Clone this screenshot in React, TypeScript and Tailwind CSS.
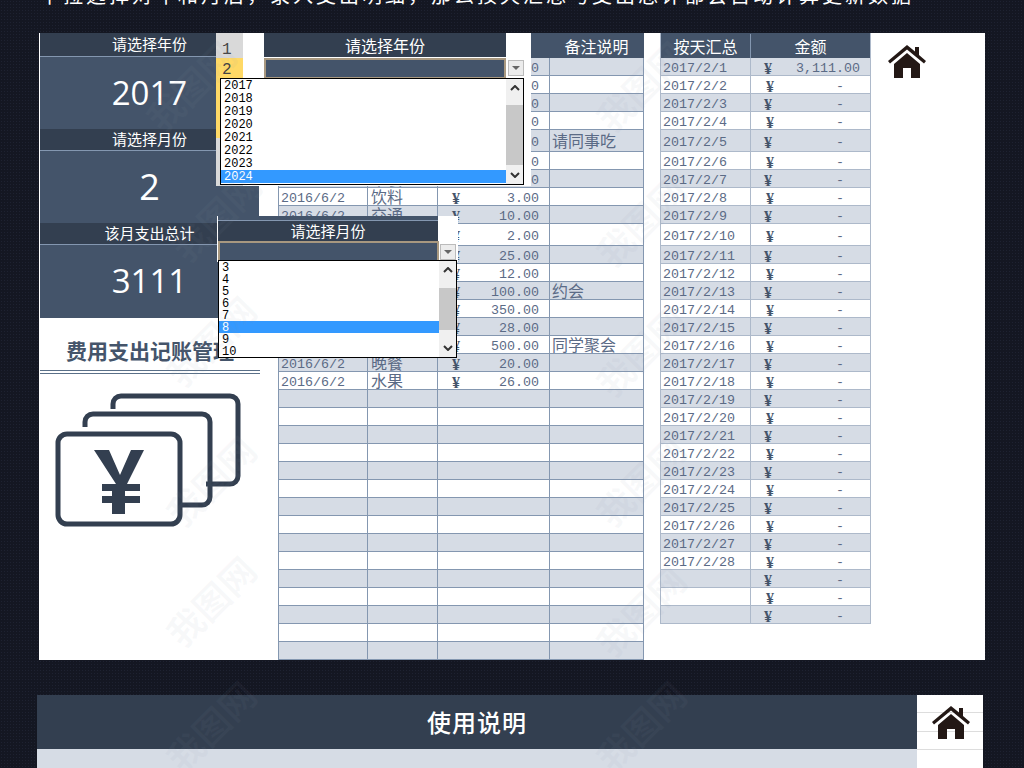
const mono = "font-['Liberation_Mono','Noto_Sans_CJK_SC',monospace]";
const yen = "font-['Liberation_Serif',serif] text-[16px] font-bold text-[#44546a]";

const detailRows: { date?: string; kind?: string; amount?: string; note?: string }[] = [
  { date: '2016/6/1', kind: '早餐', amount: '10.00' },
  { date: '2016/6/1', kind: '午餐', amount: '20.00' },
  { date: '2016/6/1', kind: '晚餐', amount: '30.00' },
  { date: '2016/6/1', kind: '水果', amount: '10.00' },
  { date: '2016/6/1', kind: '聚餐', amount: '200.00', note: '请同事吃' },
  { date: '2016/6/1', kind: '交通', amount: '10.00' },
  { date: '2016/6/2', kind: '早餐', amount: '10.00' },
  { date: '2016/6/2', kind: '饮料', amount: '3.00' },
  { date: '2016/6/2', kind: '交通', amount: '10.00' },
  { amount: '2.00' },
  { amount: '25.00' },
  { amount: '12.00' },
  { amount: '100.00', note: '约会' },
  { amount: '350.00' },
  { amount: '28.00' },
  { amount: '500.00', note: '同学聚会' },
  { date: '2016/6/2', kind: '晚餐', amount: '20.00' },
  { date: '2016/6/2', kind: '水果', amount: '26.00' },
  ...Array.from({ length: 15 }, () => ({})),
];

const dayRows = Array.from({ length: 31 }, (_, i) => (i < 28 ? `2017/2/${i + 1}` : ''));
const watermarks = [
  [190, 85], [215, 215], [210, 340], [210, 480], [210, 600], [210, 725],
  [640, 85], [640, 220], [640, 350], [640, 480], [640, 610], [640, 725],
];

const rowHeight = (i: number) => (i === 4 || i === 9 ? 'h-[22px]' : 'h-[18px]');
const rowBg = (i: number) => (i % 2 === 0 ? 'bg-[#d6dce5]' : 'bg-white');

function HomeIcon({ className }: { className: string }) {
  return (
    <svg viewBox="0 0 38 34" className={className} fill="#231815">
      <path d="M0 17 19 1l8 6.5V3h4v8l7 6-2 2.5-17-14-17 14z" />
      <path d="M6 20 19 9l13 11v14h-9V24h-8v10H6z" />
    </svg>
  );
}

function YenCards() {
  return (
    <svg viewBox="0 0 186 134" className="ml-[16px] mt-[19px] h-[134px] w-[186px]" fill="none" stroke="#333f50" strokeWidth="5">
      <path d="M58 16v-5a8 8 0 0 1 8-8h109a8 8 0 0 1 8 8v72a8 8 0 0 1-8 8h-24" />
      <path d="M30 34v-5a8 8 0 0 1 8-8h109a8 8 0 0 1 8 8v75a8 8 0 0 1-8 8h-24" />
      <rect x="3" y="41" width="122" height="90" rx="9" />
      <path stroke="none" fill="#333f50" d="M39 57h15l11 25 11-25h13l-17 34h13v7H70v5h15v7H70v11H57v-11H47v-7h10v-5H47v-7h14z" />
    </svg>
  );
}

function SidePanel() {
  const blocks = [
    ['请选择年份', '2017', 'h-[24px]', 'h-[72px]', 'text-[33px]', ''],
    ['请选择月份', '2', 'h-[22px]', 'h-[72px]', 'text-[36px]', ''],
    ['该月支出总计', '3111', 'h-[22px]', 'h-[73px]', 'text-[33px]', 'pb-[2px]'],
  ];
  return (
    <div className="h-full w-[239px] shrink-0 bg-white">
      <div className="ml-px w-[219px] text-white">
        {blocks.map(([label, value, labelH, valueH, size, nudge]) => (
          <div key={label}>
            <div className={`${labelH} flex items-center justify-center border-b border-[#8497b0] bg-[#333f50] font-['Noto_Sans_CJK_SC',sans-serif] text-[15px]`}>
              {label}
            </div>
            <div className={`${valueH} ${size} ${nudge} flex items-center justify-center bg-[#44546a] font-['Open_Sans',sans-serif]`}>
              {value}
            </div>
          </div>
        ))}
      </div>
      <div className="ml-[27px] mt-[18px] font-['Noto_Sans_CJK_SC',sans-serif] text-[21px] font-bold leading-[28px] text-[#44546a]">费用支出记账管理</div>
      <div className="ml-px mt-[6px] h-[4px] w-[220px] border-y border-[#5a7088]" />
      <YenCards />
    </div>
  );
}

function DetailTable() {
  const cell = 'h-full border-r border-[#8497b0] pt-[4px]';
  return (
    <div className="w-[366px] shrink-0 border-l border-[#8497b0]">
      <div className="flex h-[25px] items-center bg-[#44546a] text-[16px] text-white font-['Noto_Sans_CJK_SC',sans-serif]">
        <div className="w-[270px]" />
        <div className="flex-1 text-center">备注说明</div>
      </div>
      {detailRows.map((row, i) => (
        <div key={i} className={`${rowHeight(i)} ${rowBg(i)} ${mono} flex items-center border-b border-[#8497b0] text-[13.33px] leading-none text-[#5b6b86]`}>
          <div className={`${cell} flex w-[89px] items-center pl-[2px]`}>{row.date}</div>
          <div className={`${cell} flex w-[70px] items-center pl-[3px] text-[16px]`}>{row.kind}</div>
          <div className={`${cell} flex w-[112px] items-center justify-between pl-[14px] pr-[10px]`}>
            <span className={yen}>{row.amount ? '¥' : ''}</span>
            <span>{row.amount}</span>
          </div>
          <div className={`${cell} flex flex-1 items-center pl-[2px] text-[16px]`}>{row.note}</div>
        </div>
      ))}
    </div>
  );
}

function DayTable() {
  return (
    <div className="ml-[16px] w-[211px] shrink-0 self-start border-x border-[#adb9ca]">
      <div className={`flex h-[25px] items-center bg-[#44546a] font-['Noto_Sans_CJK_SC',sans-serif] text-[16px] text-white`}>
        <div className="w-[90px] border-r border-[#8497b0] text-center">按天汇总</div>
        <div className="flex-1 text-center">金额</div>
      </div>
      {dayRows.map((day, i) => (
        <div key={i} className={`${rowHeight(i)} ${rowBg(i)} ${mono} flex items-center border-b border-[#adb9ca] text-[13.33px] leading-none text-[#5b6b86]`}>
          <div className="flex h-full w-[90px] items-center border-r border-[#adb9ca] pl-[2px] pt-[4px]">{day}</div>
          <div className={`flex h-full flex-1 items-center justify-between pr-[10px] pt-[4px] ${i % 2 === 0 ? 'pl-[13px]' : 'pl-[15px]'}`}>
            <span className={yen}>¥</span>
            <span className={i === 0 ? '' : 'pr-[16px]'}>{i === 0 ? '3,111.00' : '-'}</span>
          </div>
        </div>
      ))}
    </div>
  );
}

function ListBox({ items, selected, rowClass, className, thumbClass }: { items: string[]; selected: string; rowClass: string; className: string; thumbClass: string }) {
  return (
    <div className={`absolute flex border border-black bg-white ${className}`}>
      <div className={`flex-1 ${mono} text-[12px] leading-none text-black`}>
        {items.map((item) => (
          <div key={item} className={`${rowClass} flex items-center pl-[3px] ${item === selected ? 'bg-[#3399ff] text-white' : ''}`}>{item}</div>
        ))}
      </div>
      <div className="flex w-[17px] flex-col items-center justify-between bg-[#f0f0f0] text-[#333]">
        <svg viewBox="0 0 10 6" className="mt-[6px] h-[6px] w-[10px]" fill="none" stroke="currentColor" strokeWidth="2"><path d="M1 5 5 1l4 4" /></svg>
        <div className={`w-full bg-[#c8c8c8] ${thumbClass}`} />
        <svg viewBox="0 0 10 6" className="mb-[6px] h-[6px] w-[10px]" fill="none" stroke="currentColor" strokeWidth="2"><path d="M1 1l4 4 4-4" /></svg>
      </div>
    </div>
  );
}

function DropButton({ className }: { className: string }) {
  return (
    <div className={`absolute flex h-[16px] w-[16px] items-center justify-center border border-[#bbbbbb] bg-[#ececec] ${className}`}>
      <div className="h-0 w-0 border-x-[4px] border-t-[4px] border-x-transparent border-t-[#666666]" />
    </div>
  );
}

function YearPopup() {
  return (
    <>
      <div className="absolute left-[216px] top-[33px] flex h-[153px] w-[315px] bg-white">
        <div className={`w-[27px] ${mono} text-[16px] leading-none text-[#444]`}>
          <div className="flex h-[25px] items-end bg-[#d9d9d9] pl-[6px]">1</div>
          <div className="h-[80px] bg-[#ffd966] pl-[6px] pt-[4px]">2</div>
          <div className="h-[48px] bg-[#d9d9d9]" />
        </div>
      </div>
      <div className="absolute left-[264px] top-[33px] flex h-[24px] w-[242px] items-center justify-center bg-[#333f50] font-['Noto_Sans_CJK_SC',sans-serif] text-[16px] text-white">请选择年份</div>
      <div className="absolute left-[264px] top-[58px] h-[21px] w-[242px] border-2 border-[#a89880] bg-[#44546a]" />
      <DropButton className="left-[508px] top-[60px]" />
      <ListBox
        items={['2017', '2018', '2019', '2020', '2021', '2022', '2023', '2024']}
        selected="2024"
        rowClass="h-[13px]"
        className="left-[220px] top-[78px] h-[107px] w-[304px]"
        thumbClass="mt-[6px] h-[60px]"
      />
    </>
  );
}

function MonthPopup() {
  return (
    <>
      <div className="absolute left-[217px] top-[216px] h-[46px] w-[241px] bg-white" />
      <div className="absolute left-[218px] top-[216px] h-[26px] w-[220px] bg-[#44546a] pt-[4px]">
        <div className="flex h-[22px] items-center justify-center border-t border-[#8497b0] bg-[#333f50] font-['Noto_Sans_CJK_SC',sans-serif] text-[15px] text-white">请选择月份</div>
      </div>
      <div className="absolute left-[218px] top-[241px] h-[21px] w-[221px] border-2 border-[#a89880] bg-[#44546a]" />
      <DropButton className="left-[440px] top-[244px]" />
      <ListBox
        items={['3', '4', '5', '6', '7', '8', '9', '10']}
        selected="8"
        rowClass="h-[12px] pt-[2px]"
        className="left-[218px] top-[260px] h-[98px] w-[239px]"
        thumbClass="h-[42px]"
      />
    </>
  );
}

export default function App() {
  return (
    <div className="relative h-[768px] w-[1024px] overflow-hidden bg-[#141722] bg-[radial-gradient(#1e2231_1px,transparent_1px)] bg-[length:3px_3px]">
      <p className="-mt-[15px] h-[48px] pl-[40px] font-['Noto_Sans_CJK_SC',sans-serif] text-[20px] leading-[20px] tracking-[3px] whitespace-nowrap text-white">
        下拉选择对年和月后，录入支出明细，那么按天汇总与支出总计都会自动计算更新数据
      </p>

      <div className="ml-[39px] flex h-[627px] w-[946px] bg-white">
        <SidePanel />
        <DetailTable />
        <DayTable />
        <div className="pl-[17px] pt-[11px]">
          <HomeIcon className="h-[34px] w-[38px]" />
        </div>
      </div>

      <div className="ml-[37px] mt-[35px] flex h-[73px] w-[946px]">
        <div className="w-[880px]">
          <div className="flex h-[54px] items-center justify-center bg-[#333f50] font-['Noto_Sans_CJK_SC',sans-serif] text-[24px] font-medium tracking-[1px] text-white">使用说明</div>
          <div className="h-[19px] bg-[#d6dce5]" />
        </div>
        <div className="relative flex-1 bg-white">
          <div className="h-[18px] border-b border-[#dddddd]" />
          <div className="h-[19px] border-b border-[#dddddd]" />
          <div className="h-[18px] border-b border-[#dddddd]" />
          <HomeIcon className="absolute left-[15px] top-[10px] h-[34px] w-[38px]" />
        </div>
      </div>

      <YearPopup />
      <MonthPopup />

      {watermarks.map(([x, y]) => (
        <div
          key={`${x}-${y}`}
          className="pointer-events-none absolute -translate-x-1/2 -translate-y-1/2 -rotate-45 font-['Noto_Sans_CJK_SC',sans-serif] text-[36px] font-bold whitespace-nowrap text-[#8a94a6]/[0.06]"
          style={{ left: x, top: y }}
        >
          我图网
        </div>
      ))}
    </div>
  );
}
